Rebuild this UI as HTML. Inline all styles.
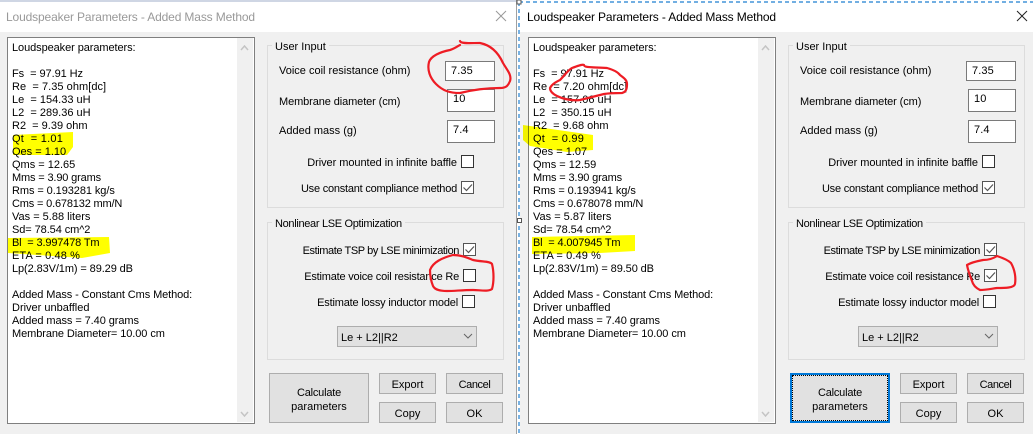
<!DOCTYPE html>
<html><head><meta charset="utf-8">
<style>
html,body{margin:0;padding:0;background:#fff}
#p{position:relative;width:1033px;height:434px;overflow:hidden;background:#fff;font:11px/14px "Liberation Sans",sans-serif;color:#000}
.d{position:absolute;top:0;width:516px;height:434px}
.bd{position:absolute;left:0;top:32px;width:516px;height:402px;background:#f0f0f0}
.t{position:absolute;left:6px;top:9px;font-size:12px;letter-spacing:-.14px;line-height:16px;white-space:pre}
.tb{position:absolute;left:7px;top:37px;width:246px;height:385px;background:#fff;border:1px solid #7f7f7f}
.sb{position:absolute;left:237px;top:38px;width:16px;height:384px;background:#f0f0f0}
.l{position:absolute;left:12px;top:42px;line-height:13px;white-space:pre;font-size:11px}
.g{position:absolute;left:267px;width:235px;border:1px solid #dcdcdc}
.a{position:absolute;white-space:pre}
.x{margin-top:1px}
.n{letter-spacing:.1px}
.cap{position:absolute;left:272px;padding:0 3px;margin-top:1px;background:#f0f0f0;white-space:pre}
.r{position:absolute;left:0;margin-top:1px;text-align:right;white-space:pre}
.i{position:absolute;background:#fff;border:1px solid #7a7a7a;box-sizing:border-box}
.c{position:absolute;width:13px;height:13px;box-sizing:border-box;border:1px solid #333;background:#fff}
.c.k{border-color:#555}
.c svg{position:absolute;left:0;top:0}
.b{position:absolute;box-sizing:border-box;background:#e1e1e1;border:1px solid #adadad;text-align:center}
.cb{position:absolute;left:337px;top:326px;width:140px;height:21px;box-sizing:border-box;background:#e1e1e1;border:1px solid #adadad}
.s{letter-spacing:-.08px}
</style></head><body>
<div id="p">

<div class="d" style="left:0">
  <div style="position:absolute;left:0;top:0;width:516px;height:2px;background:#cfd6e4"></div>
  <div class="t" style="color:#999">Loudspeaker Parameters - Added Mass Method</div>
  <svg class="a" style="left:495px;top:10px" width="12" height="12"><path d="M1 1L11 11M11 1L1 11" stroke="#999" fill="none"/></svg>
  <div class="bd"></div>
  <div class="tb"></div>
  <div class="sb"></div>
  <svg class="a" style="left:240px;top:44px" width="9" height="8"><path d="M1 6L4.500 2L8 6" stroke="#c4c4c4" stroke-width="1.500" fill="none"/></svg>
  <svg class="a" style="left:240px;top:410px" width="9" height="8"><path d="M1 2L4.500 6L8 2" stroke="#c4c4c4" stroke-width="1.500" fill="none"/></svg>
  <div class="l"><span class="s">Loudspeaker parameters:</span>

<span style="letter-spacing:-.06px">Fs  = 97.91 Hz</span>
<span style="letter-spacing:.05px">Re  = 7.35 ohm[dc]</span>
Le  = 154.33 uH
L2  = 289.36 uH
R2  = 9.39 ohm
<span style="letter-spacing:.25px">Qt  = 1.01</span>
Qes = 1.10
Qms = 12.65
<span style="letter-spacing:-.15px">Mms = 3.90 grams</span>
<span class="s">Rms = 0.193281 kg/s</span>
<span style="letter-spacing:-.17px">Cms = 0.678132 mm/N</span>
Vas = 5.88 liters
<span class="s">Sd= 78.54 cm^2</span>
<span style="letter-spacing:-.15px">Bl  = 3.997478 Tm</span>
<span style="letter-spacing:.1px">ETA = 0.48 %</span>
<span style="letter-spacing:-.1px">Lp(2.83V/1m) = 89.29 dB</span>

<span style="letter-spacing:-.1px">Added Mass - Constant Cms Method:</span>
Driver unbaffled
<span class="s">Added mass = 7.40 grams</span>
<span class="s">Membrane Diameter= 10.00 cm</span></div>

  <div class="g" style="top:45px;height:161px"></div>
  <div class="cap" style="top:39px">User Input</div>
  <div class="a x" style="left:279px;top:63px">Voice coil resistance (ohm)</div>
  <div class="i" style="left:445px;top:61px;width:50px;height:20px"></div>
  <div class="a n" style="left:451px;top:64px">7.35</div>
  <div class="a x" style="left:279px;top:94px;letter-spacing:-.1px">Membrane diameter (cm)</div>
  <div class="i" style="left:447px;top:89px;width:48px;height:23px"></div>
  <div class="a n" style="left:453px;top:92px">10</div>
  <div class="a x" style="left:279px;top:123px">Added mass (g)</div>
  <div class="i" style="left:447px;top:120px;width:48px;height:23px"></div>
  <div class="a n" style="left:453px;top:123px">7.4</div>
  <div class="r" style="width:457px;top:155px;letter-spacing:-.05px">Driver mounted in infinite baffle</div>
  <div class="c" style="left:461px;top:155px"></div>
  <div class="r" style="width:457px;top:181px;letter-spacing:-.22px">Use constant compliance method</div>
  <div class="c k" style="left:461px;top:181px"><svg width="11" height="11"><path d="M1.500 5.500L4.500 8.500L10 2.500" stroke="#555" stroke-width="1.200" fill="none"/></svg></div>

  <div class="g" style="top:222px;height:136px"></div>
  <div class="cap" style="top:216px;letter-spacing:-.32px">Nonlinear LSE Optimization</div>
  <div class="r" style="width:459px;top:243px;letter-spacing:-.41px">Estimate TSP by LSE minimization</div>
  <div class="c k" style="left:463px;top:243px"><svg width="11" height="11"><path d="M1.500 5.500L4.500 8.500L10 2.500" stroke="#555" stroke-width="1.200" fill="none"/></svg></div>
  <div class="r" style="width:459px;top:269px;letter-spacing:-.2px">Estimate voice coil resistance Re</div>
  <div class="c" style="left:463px;top:269px"></div>
  <div class="r" style="width:458px;top:295px;letter-spacing:-.18px">Estimate lossy inductor model</div>
  <div class="c" style="left:462px;top:295px"></div>
  <div class="cb"></div>
  <div class="a x" style="left:341px;top:330px">Le + L2||R2</div>
  <svg class="a" style="left:463px;top:333px" width="10" height="7"><path d="M1 1L5 5L9 1" stroke="#666" fill="none"/></svg>

  <div class="b" style="left:269px;top:373px;width:100px;height:50px;padding-top:12px"><span style="letter-spacing:-.2px">Calculate</span><br>parameters</div>
  <div class="b" style="left:379px;top:373px;width:57px;height:21px;padding-top:4px">Export</div>
  <div class="b" style="left:446px;top:373px;width:57px;height:21px;padding-top:4px;letter-spacing:-.4px">Cancel</div>
  <div class="b" style="left:379px;top:402px;width:57px;height:21px;padding-top:4px">Copy</div>
  <div class="b" style="left:446px;top:402px;width:57px;height:21px;padding-top:4px">OK</div>
</div>

<div style="position:absolute;left:516px;top:0;width:1px;height:434px;background:#a0a0a0"></div>

<div class="d" style="left:521px;width:512px">
  <div style="position:absolute;left:-1px;top:32px;width:513px;height:402px;background:#f0f0f0"></div>
  <div class="t">Loudspeaker Parameters - Added Mass Method</div>
  <svg class="a" style="left:495px;top:10px" width="12" height="12"><path d="M1 1L11 11M11 1L1 11" stroke="#222" fill="none"/></svg>
  <div class="tb"></div>
  <div class="sb"></div>
  <svg class="a" style="left:240px;top:44px" width="9" height="8"><path d="M1 6L4.500 2L8 6" stroke="#c4c4c4" stroke-width="1.500" fill="none"/></svg>
  <svg class="a" style="left:240px;top:410px" width="9" height="8"><path d="M1 2L4.500 6L8 2" stroke="#c4c4c4" stroke-width="1.500" fill="none"/></svg>
  <div class="l"><span class="s">Loudspeaker parameters:</span>

<span style="letter-spacing:-.06px">Fs  = 97.91 Hz</span>
<span style="letter-spacing:.05px">Re  = 7.20 ohm[dc]</span>
Le  = 157.06 uH
L2  = 350.15 uH
R2  = 9.68 ohm
<span style="letter-spacing:.25px">Qt  = 0.99</span>
Qes = 1.07
Qms = 12.59
<span style="letter-spacing:-.15px">Mms = 3.90 grams</span>
<span class="s">Rms = 0.193941 kg/s</span>
<span style="letter-spacing:-.17px">Cms = 0.678078 mm/N</span>
Vas = 5.87 liters
<span class="s">Sd= 78.54 cm^2</span>
<span style="letter-spacing:-.15px">Bl  = 4.007945 Tm</span>
<span style="letter-spacing:.1px">ETA = 0.49 %</span>
<span style="letter-spacing:-.1px">Lp(2.83V/1m) = 89.50 dB</span>

<span style="letter-spacing:-.1px">Added Mass - Constant Cms Method:</span>
Driver unbaffled
<span class="s">Added mass = 7.40 grams</span>
<span class="s">Membrane Diameter= 10.00 cm</span></div>

  <div class="g" style="top:45px;height:161px"></div>
  <div class="cap" style="top:39px">User Input</div>
  <div class="a x" style="left:279px;top:63px">Voice coil resistance (ohm)</div>
  <div class="i" style="left:445px;top:61px;width:50px;height:20px"></div>
  <div class="a n" style="left:451px;top:64px">7.35</div>
  <div class="a x" style="left:279px;top:94px;letter-spacing:-.1px">Membrane diameter (cm)</div>
  <div class="i" style="left:447px;top:89px;width:48px;height:23px"></div>
  <div class="a n" style="left:453px;top:92px">10</div>
  <div class="a x" style="left:279px;top:123px">Added mass (g)</div>
  <div class="i" style="left:447px;top:120px;width:48px;height:23px"></div>
  <div class="a n" style="left:453px;top:123px">7.4</div>
  <div class="r" style="width:457px;top:155px;letter-spacing:-.05px">Driver mounted in infinite baffle</div>
  <div class="c" style="left:461px;top:155px"></div>
  <div class="r" style="width:457px;top:181px;letter-spacing:-.22px">Use constant compliance method</div>
  <div class="c k" style="left:461px;top:181px"><svg width="11" height="11"><path d="M1.500 5.500L4.500 8.500L10 2.500" stroke="#555" stroke-width="1.200" fill="none"/></svg></div>

  <div class="g" style="top:222px;height:136px"></div>
  <div class="cap" style="top:216px;letter-spacing:-.32px">Nonlinear LSE Optimization</div>
  <div class="r" style="width:459px;top:243px;letter-spacing:-.41px">Estimate TSP by LSE minimization</div>
  <div class="c k" style="left:463px;top:243px"><svg width="11" height="11"><path d="M1.500 5.500L4.500 8.500L10 2.500" stroke="#555" stroke-width="1.200" fill="none"/></svg></div>
  <div class="r" style="width:459px;top:269px;letter-spacing:-.2px">Estimate voice coil resistance Re</div>
  <div class="c k" style="left:463px;top:269px"><svg width="11" height="11"><path d="M1.500 5.500L4.500 8.500L10 2.500" stroke="#555" stroke-width="1.200" fill="none"/></svg></div>
  <div class="r" style="width:458px;top:295px;letter-spacing:-.18px">Estimate lossy inductor model</div>
  <div class="c" style="left:462px;top:295px"></div>
  <div class="cb"></div>
  <div class="a x" style="left:341px;top:330px">Le + L2||R2</div>
  <svg class="a" style="left:463px;top:333px" width="10" height="7"><path d="M1 1L5 5L9 1" stroke="#666" fill="none"/></svg>

  <div class="b" style="left:269px;top:373px;width:100px;height:50px;padding-top:11px;border:2px solid #0078d7;outline:1px dotted #000;outline-offset:-3px"><span style="letter-spacing:-.2px">Calculate</span><br>parameters</div>
  <div class="b" style="left:379px;top:373px;width:57px;height:21px;padding-top:4px">Export</div>
  <div class="b" style="left:446px;top:373px;width:57px;height:21px;padding-top:4px;letter-spacing:-.4px">Cancel</div>
  <div class="b" style="left:379px;top:402px;width:57px;height:21px;padding-top:4px">Copy</div>
  <div class="b" style="left:446px;top:402px;width:57px;height:21px;padding-top:4px">OK</div>
</div>

<svg class="a" style="left:0;top:0;mix-blend-mode:multiply" width="1033" height="434">
  <path d="M13 135L73 132L73 147L67 155L13 155Z" fill="#ffff00"/>
  <path d="M8 238L109 237L110 253L82 258L8 253Z" fill="#ffff00"/>
  <path d="M523 125L593 135L593 150L567 152L530 146L523 140Z" fill="#ffff00"/>
  <path d="M532 237L635 235L635 251L600 253L532 254Z" fill="#ffff00"/>
</svg>

<svg class="a" style="left:0;top:0" width="1033" height="434">
  <path d="M519 2H1033M519 2V434" stroke="#1f7fd0" stroke-width="1.200" stroke-dasharray="4 3" fill="none"/>
  <rect x="517" y="0" width="4" height="4" fill="#fff" stroke="#555"/>
  <rect x="517.500" y="218.500" width="4" height="4" fill="#fff" stroke="#555"/>
  <g fill="none" stroke="#ee1c24" stroke-width="2.200" stroke-linejoin="round" stroke-linecap="round">
    <path d="M460 41C461 44 470 43 480 43C490 45 498 52 503 63C507 70 512 75 510 81C508 86 506 88 500 88C488 88 472 90 460 93C450 93 443 91 436 84C430 78 427 70 429 62C431 56 440 52 450 50C454 49 458 46 460 45"/>
    <path d="M430 270C433 262 442 258 453 255C462 255 468 258 473 260C482 262 490 261 492 264C494 272 494 282 492 289C488 292 480 290 473 290C462 290 455 291 447 291C440 291 435 290 433 286C431 281 430 276 430 270Z"/>
    <path d="M550 88C552 84 556 82 560 80C565 75 568 70 572 68C578 66 582 64 584 65C584 68 594 67 607 68C614 70 618 72 620 75C624 78 627 80 627 84C627 89 626 92 622 93C616 93 610 93 604 94C596 96 588 98 580 100C572 101 563 99 557 96C553 94 550 91 550 88Z"/>
    <path d="M967 265C972 262 978 261 983 260C990 260 994 258 997 256C1003 258 1008 260 1011 263C1015 270 1016 278 1015 284C1014 288 1005 288 997 288C990 289 985 290 980 290C976 288 973 285 972 281C970 276 968 270 967 265Z"/>
  </g>
</svg>

</div>
</body></html>
